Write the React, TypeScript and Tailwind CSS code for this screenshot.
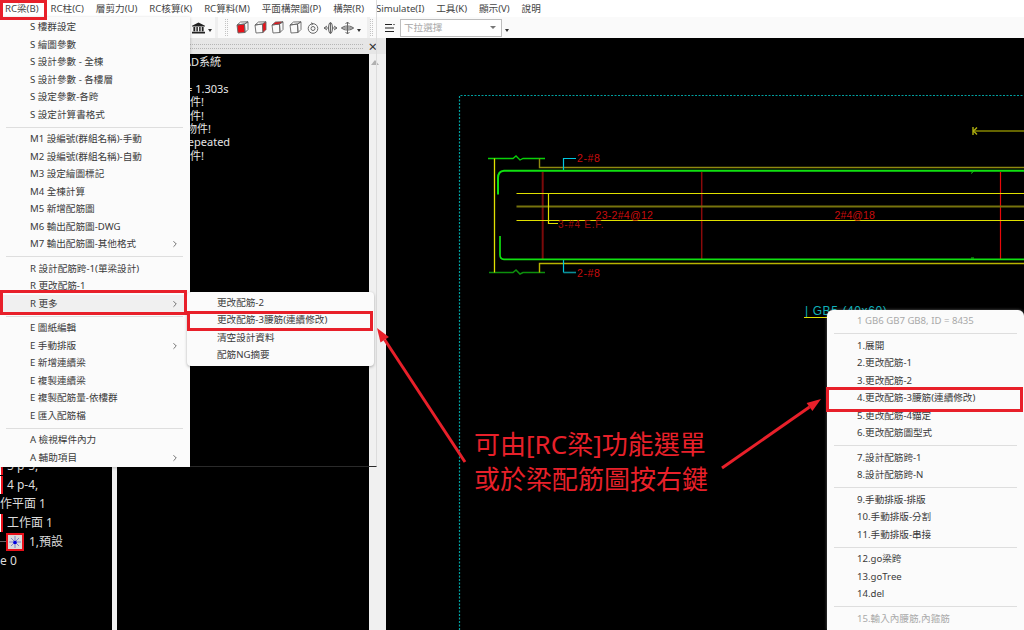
import { ChevronRight } from 'lucide-react';

type Item = { t: string; more?: boolean; off?: boolean; on?: boolean } | null;

const mainMenu = ['RC梁(B)', 'RC柱(C)', '層剪力(U)', 'RC核算(K)', 'RC算料(M)', '平面構架圖(P)', '構架(R)', 'Simulate(I)', '工具(K)', '顯示(V)', '說明'];

const dropdown: Item[] = [
  { t: 'S 樓群設定' },
  { t: 'S 繪圖參數' },
  { t: 'S 設計參數 - 全棟' },
  { t: 'S 設計參數 - 各樓層' },
  { t: 'S 設定參數-各跨' },
  { t: 'S 設定計算書格式' },
  null,
  { t: 'M1 設編號(群組名稱)-手動' },
  { t: 'M2 設編號(群組名稱)-自動' },
  { t: 'M3 設定繪圖標記' },
  { t: 'M4 全棟計算' },
  { t: 'M5 新增配筋圖' },
  { t: 'M6 輸出配筋圖-DWG' },
  { t: 'M7 輸出配筋圖-其他格式', more: true },
  null,
  { t: 'R 設計配筋跨-1(單梁設計)' },
  { t: 'R 更改配筋-1' },
  { t: 'R 更多', more: true, on: true },
  null,
  { t: 'E 圖紙編輯' },
  { t: 'E 手動排版', more: true },
  { t: 'E 新增連續梁' },
  { t: 'E 複製連續梁' },
  { t: 'E 複製配筋量-依樓群' },
  { t: 'E 匯入配筋檔' },
  null,
  { t: 'A 檢視桿件內力' },
  { t: 'A 輔助項目', more: true },
];

const submenu: Item[] = [{ t: '更改配筋-2' }, { t: '更改配筋-3腰筋(連續修改)' }, { t: '清空設計資料' }, { t: '配筋NG摘要' }];

const contextMenu: Item[] = [
  { t: '1 GB6 GB7 GB8, ID = 8435', off: true },
  null,
  { t: '1.展開' },
  { t: '2.更改配筋-1' },
  { t: '3.更改配筋-2' },
  { t: '4.更改配筋-3腰筋(連續修改)' },
  { t: '5.更改配筋-4錨定' },
  { t: '6.更改配筋圖型式' },
  null,
  { t: '7.設計配筋跨-1' },
  { t: '8.設計配筋跨-N' },
  null,
  { t: '9.手動排版-排版' },
  { t: '10.手動排版-分割' },
  { t: '11.手動排版-串接' },
  null,
  { t: '12.go梁跨' },
  { t: '13.goTree' },
  { t: '14.del' },
  null,
  { t: '15.輸入內腰筋,內箍筋', off: true },
];

const consoleLines = [
  { t: 'CAD系統', cls: 'pl-[60px]' },
  { t: '\u00a0', cls: '' },
  { t: '= 1.303s', cls: 'pl-[69px]' },
  { t: '構件!', cls: 'pl-[62px]' },
  { t: '構件!', cls: 'pl-[62px]' },
  { t: '物件!', cls: 'pl-[69px]' },
  { t: 'Repeated', cls: 'pl-[64px]' },
  { t: '構件!', cls: 'pl-[62px]' },
];

function MenuRows({ items, sepLeft }: { items: Item[]; sepLeft: boolean }) {
  return (
    <>
      {items.map((it, i) =>
        it === null ? (
          <div key={i} className={`h-[7px] flex items-center ${sepLeft ? 'pl-[6px] pr-[7px]' : 'pl-[7px] pr-[7px]'}`}>
            <div className="h-px w-full bg-[#dedede]" />
          </div>
        ) : (
          <div
            key={i}
            className={`h-[17.5px] flex items-center justify-between pr-[10px] leading-none ${it.on ? 'bg-[#f0f0f0]' : ''} ${it.off ? 'text-[#a9a9a9]' : 'text-[#3a3a3a]'}`}
          >
            <span className="whitespace-nowrap pl-[30px]">{it.t}</span>
            {it.more && <ChevronRight className="h-[10px] w-[10px] text-[#555]" strokeWidth={2} />}
          </div>
        ),
      )}
    </>
  );
}

function Cube({ face }: { face?: 'front' | 'side' | 'top' }) {
  return (
    <svg viewBox="0 0 13 13" className="h-[13px] w-[13px]" fill="none" stroke="#666" strokeWidth="0.9" strokeLinejoin="round">
      <path d="M1 4L8.5 3L9 11.5L2 12Z" fill={face === 'front' ? '#ec1018' : 'none'} />
      <path d="M1 4L4.5 1L12 .8L8.5 3Z" fill={face === 'top' ? '#ec1018' : 'none'} />
      <path d="M8.5 3L12 .8L12 8.5L9 11.5Z" fill={face === 'side' ? '#ec1018' : 'none'} />
    </svg>
  );
}

function Caret() {
  return <span className="ml-[3px] mt-[6px] h-0 w-0 border-x-[2.5px] border-t-[3px] border-x-transparent border-t-[#333]" />;
}

function Dots() {
  return <div className="h-[17px] w-[3px] border-x border-dotted border-[#c4c4c4]" />;
}

function StarIcon() {
  return (
    <div className="flex h-[18px] w-[18px] items-center justify-center border-2 border-[#e8101a] bg-[#d9d9d9]">
      <svg viewBox="0 0 14 14" className="h-[14px] w-[14px]" stroke="#5a5ac8" strokeWidth="0.7">
        <path d="M7 1V13M1 7H13M3 3L11 11M11 3L3 11" />
        <circle cx="7" cy="7.5" r="1.8" fill="#0000e0" stroke="none" />
      </svg>
    </div>
  );
}

function Drawing() {
  const label = 'Liberation Sans, sans-serif';
  return (
    <svg viewBox="386 38 638 592" className="block h-full w-full">
      <path d="M459.5 630V95.5H1024" fill="none" stroke="#00a0a0" strokeWidth="1.2" strokeDasharray="2 1.5" />
      {/* break lines */}
      <path d="M488 158.5H513L516 156L520 160L523 158.5H545" fill="none" stroke="#08d008" strokeWidth="1.3" />
      <path d="M489 272.5H513L516 270L520 274L523 272.5H545" fill="none" stroke="#0c8f0c" strokeWidth="1.6" />
      <path d="M494.5 158.5V272.5" stroke="#e0e000" strokeWidth="1.3" />
      {/* olive and cyan leaders */}
      <path d="M539.5 158.5V167.5H1024" fill="none" stroke="#8f8a10" strokeWidth="1.4" />
      <path d="M539.5 272.5V263.5H1024" fill="none" stroke="#b8b400" strokeWidth="1.4" />
      <path d="M563.5 170V158.5H576" fill="none" stroke="#00c8e0" strokeWidth="1.2" />
      <path d="M563.5 260V272.5" stroke="#00c8e0" strokeWidth="1.2" />
      <path d="M563.5 272.5H576" stroke="#0b8e96" strokeWidth="1.6" />
      {/* stirrups */}
      <path d="M542.7 172V259" stroke="#7a0a0a" strokeWidth="2" />
      <path d="M701.7 172V259" stroke="#8a0a0a" strokeWidth="1.5" />
      <path d="M1000.5 172V259" stroke="#e80808" strokeWidth="1.2" />
      {/* main bars */}
      <path d="M1024 170.7H504Q498 171 498 178V194.5" fill="none" stroke="#10e010" strokeWidth="2" />
      <path d="M500 236V255Q500 259 504 259.3H1024" fill="none" stroke="#10e010" strokeWidth="1.7" />
      <path d="M971 173.5L974 171M971 258H974" stroke="#14c014" />
      {/* web bars */}
      <path d="M516.5 193.5H1024" stroke="#e0e000" strokeWidth="1.2" />
      <path d="M516.5 206.5H1024" stroke="#77730c" strokeWidth="2" />
      <path d="M516.5 220.5H1024" stroke="#e0e000" strokeWidth="1.2" />
      <path d="M548.5 193.5V223.5H558" fill="none" stroke="#e0e000" strokeWidth="1.2" />
      {/* top right section mark */}
      <path d="M975 131H1024" stroke="#c8c800" strokeWidth="1.2" />
      <path d="M973 127V135M973.5 131L977 127.5M973.5 131L977 134.5" fill="none" stroke="#b0b010" strokeWidth="1.4" />
      {/* labels */}
      <g fill="#c80c0c" fontFamily={label} fontSize="10.5">
        <text x="577" y="162" letterSpacing="0.6">2-#8</text>
        <text x="577" y="277" letterSpacing="0.6">2-#8</text>
        <text x="595.5" y="219" letterSpacing="0.3">23-2#4@12</text>
        <text x="834.5" y="219" letterSpacing="0.1">2#4@18</text>
        <text x="558" y="227.5" fill="#a00c0c" fontSize="10" letterSpacing="0.7">3-#4 E.F.</text>
      </g>
      <text x="805" y="315" fill="#0fb0b8" fontFamily={label} fontSize="12" letterSpacing="0.6">| GB5 (40x60)</text>
      <path d="M804 317.5H832" stroke="#e0e000" />
    </svg>
  );
}

export default function App() {
  return (
    <div className="relative flex h-[630px] w-[1024px] flex-col overflow-hidden bg-[#f0f0f0] font-['Noto_Sans','Noto_Sans_CJK_TC',sans-serif] text-[9.6px]">
      {/* menu bar */}
      <div className="flex h-[17px] items-center gap-[11.9px] bg-white pl-[5px] text-[#444]">
        {mainMenu.map((m) => (
          <span key={m} className="whitespace-nowrap leading-none">{m}</span>
        ))}
      </div>

      {/* toolbar */}
      <div className="flex h-[21px] gap-[3px] bg-[#efefef] pl-[190px]">
        <div className="flex w-[25px] items-center bg-[#fafafa] pl-[2px]">
          <svg viewBox="0 0 14 12" className="h-[12px] w-[13px]" fill="#222">
            <path d="M7 0L14 3.5V4.5H0V3.5ZM1.5 5H3.5V9.5H1.5ZM4.7 5H6.3V9.5H4.7ZM7.7 5H9.3V9.5H7.7ZM10.5 5H12.5V9.5H10.5ZM0 10H14V12H0Z" />
          </svg>
          <Caret />
        </div>
        <div className="flex w-[149px] items-center bg-[#fafafa] pl-[7px]">
          <Dots />
          <div className="ml-[8px] flex items-center gap-[4.5px]">
            <Cube face="front" />
            <Cube face="side" />
            <Cube face="top" />
            <Cube />
          </div>
          <svg viewBox="0 0 12 12" className="ml-[5px] h-[12px] w-[12px]" fill="none" stroke="#666">
            <circle cx="6" cy="6.5" r="4.8" />
            <circle cx="6" cy="6.5" r="2" />
            <path d="M4 .8L6 1.7L4.5 3" />
          </svg>
          <svg viewBox="0 0 13 12" className="ml-[5px] h-[12px] w-[13px]" fill="none" stroke="#666">
            <path d="M0 6H13M3 4L0 6L3 8M10 4L13 6L10 8" />
            <ellipse cx="6.5" cy="6" rx="2" ry="5.5" fill="#e4e4e4" />
            <path d="M6.5 .5V11.5" />
          </svg>
          <svg viewBox="0 0 13 12" className="ml-[4px] h-[12px] w-[13px]" fill="none" stroke="#666">
            <ellipse cx="6.5" cy="6" rx="5.5" ry="2" fill="#e4e4e4" />
            <path d="M0 6H13M6.5 0V12M4.5 2L6.5 0L8.5 2M4.5 10L6.5 12L8.5 10" />
          </svg>
          <Caret />
        </div>
        <div className="flex flex-1 items-center bg-[#fafafa]">
          <Dots />
          <svg viewBox="0 0 10 8" className="ml-[12px] h-[8px] w-[10px]" fill="#222">
            <path d="M0 0H7V1H0ZM0 3.5H9V4.5H0ZM0 7H9V8H0ZM8 0H10L9 1.2Z" />
          </svg>
          <div className="ml-[5px] flex h-[18px] w-[102px] items-center justify-between border border-[#bdbdbd] bg-white pl-[3px] pr-[5px] leading-none text-[#a8a8a8]">
            <span>下拉選擇</span>
            <span className="h-0 w-0 border-x-[3px] border-t-[3px] border-x-transparent border-t-[#777]" />
          </div>
          <Caret />
        </div>
      </div>

      {/* work area */}
      <div className="flex min-h-0 flex-1">
        <div className="flex w-[112px] flex-col bg-black pb-[60px] pt-[419px] text-[12px] text-[#dcdcdc]">
          <div className="flex h-[19px] items-center gap-[4px] leading-none">
            <div className="h-[18px] w-[3px] border-r-2 border-[#e8101a] bg-white" />
            <span>5 p-5,</span>
          </div>
          <div className="flex h-[19px] items-center gap-[4px] leading-none">
            <div className="h-[18px] w-[3px] border-r-2 border-[#e8101a] bg-white" />
            <span>4 p-4,</span>
          </div>
          <div className="flex h-[19px] items-center leading-none">作平面 1</div>
          <div className="flex h-[19px] items-center gap-[4px] leading-none">
            <div className="h-[18px] w-[3px] border-r-2 border-[#e8101a] bg-white" />
            <span>工作面 1</span>
          </div>
          <div className="flex h-[19px] items-center leading-none">
            <div className="h-px w-[6px] bg-[#666]" />
            <StarIcon />
            <span className="ml-[5px]">1,預設</span>
          </div>
          <div className="flex h-[19px] items-center leading-none">e 0</div>
        </div>

        <div className="ml-[5px] flex w-[269px] flex-col">
          <div className="flex h-[16px] items-center bg-[#e6e6e6] pr-[9px]">
            <div className="mr-[5px] h-[5px] flex-1 border-y border-dotted border-[#b5b5b5]" />
            <span className="text-[15px] leading-none text-[#333]">×</span>
          </div>
          <div className="flex min-h-0 flex-1">
            <div className="w-[252px] bg-black pt-[1px] text-[11px] leading-[13.4px] text-[#e6e6e6]">
              {consoleLines.map((l, i) => (
                <div key={i} className={`whitespace-nowrap ${l.cls}`}>{l.t}</div>
              ))}
            </div>
            <div className="flex w-[12px] justify-center pt-[6px]">
              <span className="h-0 w-0 border-x-[4px] border-b-[5px] border-x-transparent border-b-[#b0b0b0]" />
            </div>
          </div>
        </div>

        <div className="min-w-0 flex-1 bg-black">
          <Drawing />
        </div>
      </div>

      {/* popup menus */}
      <div className="absolute left-[112px] top-0 h-[467px] w-[265px] border-b border-r border-b-[#2a2a2a] border-r-[#dcdcdc]" />
      <div className="absolute left-0 top-[17px] h-[450px] w-[190px] bg-[#fbfbfb] pt-[1.5px] shadow-[0_1px_3px_rgba(0,0,0,0.25)]">
        <MenuRows items={dropdown} sepLeft />
      </div>
      <div className="absolute left-[187px] top-[292px] w-[187px] rounded-[4px] bg-[#fbfbfb] py-[2px] shadow-[0_1px_3px_rgba(0,0,0,0.3)]">
        <MenuRows items={submenu} sepLeft={false} />
      </div>
      <div className="absolute left-[827px] top-[310px] h-[320px] w-[197px] rounded-t-[6px] bg-[#fbfbfb] pt-[2.5px] shadow-[0_0_3px_rgba(255,255,255,0.4)]">
        <MenuRows items={contextMenu} sepLeft={false} />
      </div>

      {/* red callouts */}
      <div className="absolute left-0 top-0 h-[20px] w-[47px] border-[3px] border-[#e8202a]" />
      <div className="absolute left-0 top-[290px] h-[25px] w-[187px] border-[3px] border-[#e8202a]" />
      <div className="absolute left-[187px] top-[311px] h-[20px] w-[186px] border-[3px] border-[#e8202a]" />
      <div className="absolute left-[826px] top-[387px] h-[25px] w-[197px] border-[3px] border-[#e8202a]" />

      <svg viewBox="0 0 1024 630" className="pointer-events-none absolute inset-0 h-[630px] w-[1024px]">
        <path d="M465 462L384.7 339.7" stroke="#e8202a" strokeWidth="3" />
        <polygon points="377,328 388.9,337 380.5,342.4" fill="#e8202a" />
        <path d="M722 468L809.5 407" stroke="#e8202a" strokeWidth="3" />
        <polygon points="821,399 812.4,411.1 806.6,402.9" fill="#e8202a" />
      </svg>

      <div className="absolute left-[474px] top-[427px] whitespace-nowrap text-[26px] leading-[35px] text-[#e8202a]">
        <div>可由[RC梁]功能選單</div>
        <div>或於梁配筋圖按右鍵</div>
      </div>
    </div>
  );
}
